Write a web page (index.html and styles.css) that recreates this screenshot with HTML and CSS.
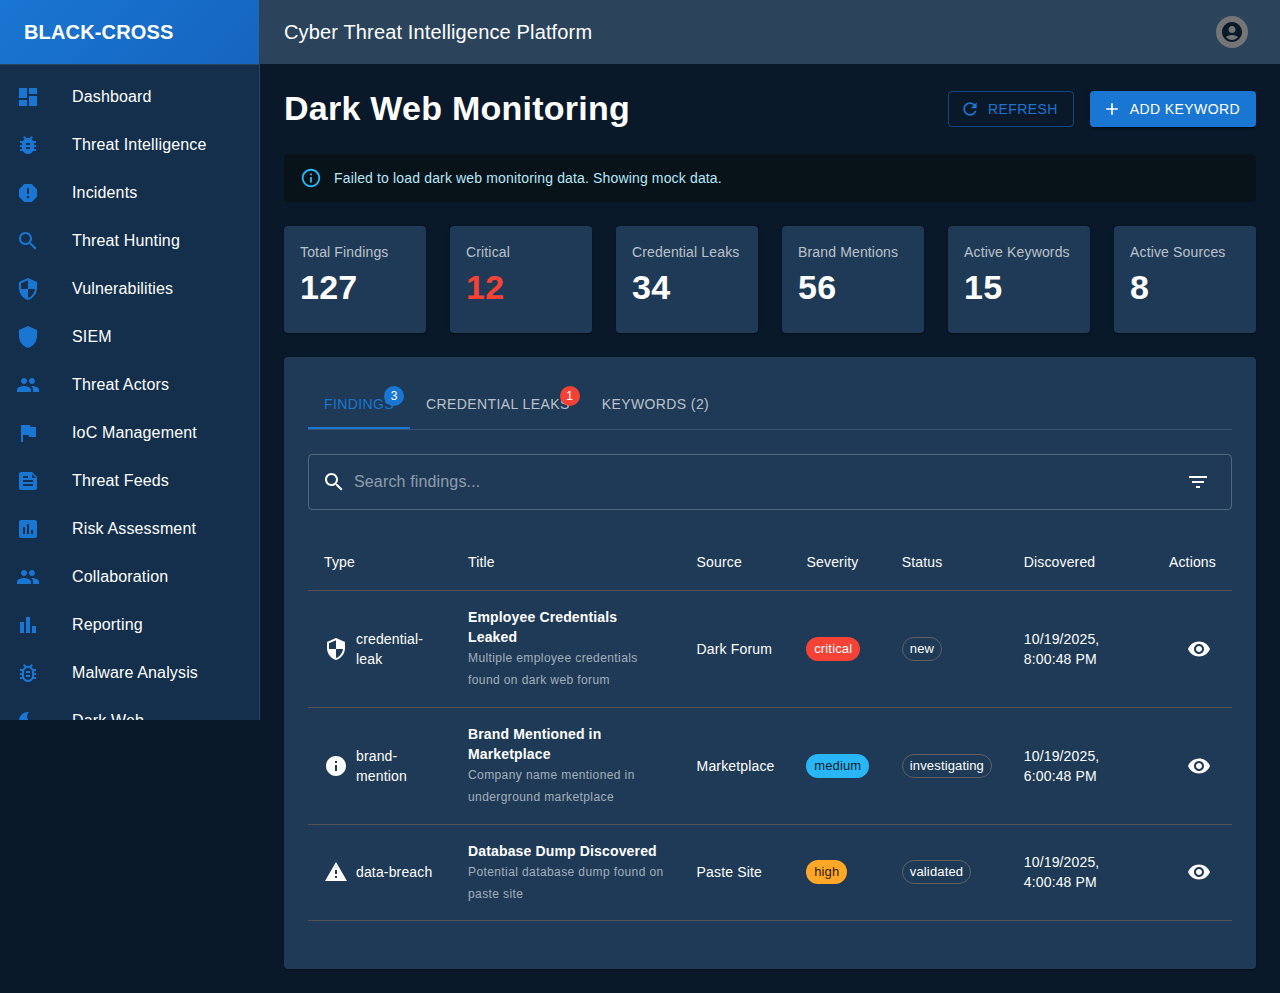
FILE: index.html
```html
<!DOCTYPE html>
<html lang="en">
<head>
<meta charset="utf-8">
<title>Dark Web Monitoring</title>
<link rel="stylesheet" href="styles.css">
</head>
<body>
<div class="app">
  <aside class="sidebar">
    <div class="brand">BLACK-CROSS</div>
    <nav class="nav">
      <a class="nav-item"><svg class="nav-icon" viewBox="0 0 24 24"><path d="M3 13h8V3H3v10zm0 8h8v-6H3v6zm10 0h8V11h-8v10zm0-18v6h8V3h-8z"/></svg><span>Dashboard</span></a>
      <a class="nav-item"><svg class="nav-icon" viewBox="0 0 24 24"><path d="M20 8h-2.81c-.45-.78-1.07-1.45-1.82-1.96L17 4.41 15.59 3l-2.17 2.17C12.96 5.06 12.49 5 12 5c-.49 0-.96.06-1.41.17L8.41 3 7 4.41l1.62 1.63C7.88 6.55 7.26 7.22 6.81 8H4v2h2.09c-.05.33-.09.66-.09 1v1H4v2h2v1c0 .34.04.67.09 1H4v2h2.81c1.04 1.79 2.97 3 5.19 3s4.15-1.21 5.19-3H20v-2h-2.09c.05-.33.09-.66.09-1v-1h2v-2h-2v-1c0-.34-.04-.67-.09-1H20V8zm-6 8h-4v-2h4v2zm0-4h-4v-2h4v2z"/></svg><span>Threat Intelligence</span></a>
      <a class="nav-item"><svg class="nav-icon" viewBox="0 0 24 24"><path d="M15.73 3H8.27L3 8.27v7.46L8.27 21h7.46L21 15.73V8.27L15.73 3zM12 17.3c-.72 0-1.3-.58-1.3-1.3 0-.72.58-1.3 1.3-1.3.72 0 1.3.58 1.3 1.3 0 .72-.58 1.3-1.3 1.3zm1-4.3h-2V7h2v6z"/></svg><span>Incidents</span></a>
      <a class="nav-item"><svg class="nav-icon" viewBox="0 0 24 24"><path d="M15.5 14h-.79l-.28-.27C15.41 12.59 16 11.11 16 9.5 16 5.91 13.09 3 9.5 3S3 5.91 3 9.5 5.91 16 9.5 16c1.61 0 3.09-.59 4.23-1.57l.27.28v.79l5 4.99L20.49 19l-4.99-5zm-6 0C7.01 14 5 11.99 5 9.5S7.01 5 9.5 5 14 7.01 14 9.5 11.99 14 9.5 14z"/></svg><span>Threat Hunting</span></a>
      <a class="nav-item"><svg class="nav-icon" viewBox="0 0 24 24"><path d="M12 1L3 5v6c0 5.55 3.84 10.74 9 12 5.16-1.26 9-6.45 9-12V5l-9-4zm0 10.99h7c-.53 4.12-3.28 7.79-7 8.94V12H5V6.3l7-3.11v8.8z"/></svg><span>Vulnerabilities</span></a>
      <a class="nav-item"><svg class="nav-icon" viewBox="0 0 24 24"><path d="M12 1L3 5v6c0 5.55 3.84 10.74 9 12 5.16-1.26 9-6.45 9-12V5l-9-4z"/></svg><span>SIEM</span></a>
      <a class="nav-item"><svg class="nav-icon" viewBox="0 0 24 24"><path d="M16 11c1.66 0 2.99-1.34 2.99-3S17.66 5 16 5c-1.66 0-3 1.34-3 3s1.34 3 3 3zm-8 0c1.66 0 2.99-1.34 2.99-3S9.66 5 8 5C6.34 5 5 6.34 5 8s1.34 3 3 3zm0 2c-2.33 0-7 1.17-7 3.5V19h14v-2.5c0-2.33-4.67-3.5-7-3.5zm8 0c-.29 0-.62.02-.97.05 1.16.84 1.97 1.97 1.97 3.45V19h6v-2.5c0-2.33-4.67-3.5-7-3.5z"/></svg><span>Threat Actors</span></a>
      <a class="nav-item"><svg class="nav-icon" viewBox="0 0 24 24"><path d="M14.4 6L14 4H5v17h2v-7h5.6l.4 2h7V6z"/></svg><span>IoC Management</span></a>
      <a class="nav-item"><svg class="nav-icon" viewBox="0 0 24 24"><path d="M16 3H5c-1.1 0-1.99.9-1.99 2L3 19c0 1.1.89 2 1.99 2H19c1.1 0 2-.9 2-2V8l-5-5zM7 7h5v2H7V7zm10 10H7v-2h10v2zm0-4H7v-2h10v2zm-1-4V5l4 4h-4z"/></svg><span>Threat Feeds</span></a>
      <a class="nav-item"><svg class="nav-icon" viewBox="0 0 24 24"><path d="M19 3H5c-1.1 0-2 .9-2 2v14c0 1.1.9 2 2 2h14c1.1 0 2-.9 2-2V5c0-1.1-.9-2-2-2zM9 17H7v-7h2v7zm4 0h-2V7h2v10zm4 0h-2v-4h2v4z"/></svg><span>Risk Assessment</span></a>
      <a class="nav-item"><svg class="nav-icon" viewBox="0 0 24 24"><path d="M16 11c1.66 0 2.99-1.34 2.99-3S17.66 5 16 5c-1.66 0-3 1.34-3 3s1.34 3 3 3zm-8 0c1.66 0 2.99-1.34 2.99-3S9.66 5 8 5C6.34 5 5 6.34 5 8s1.34 3 3 3zm0 2c-2.33 0-7 1.17-7 3.5V19h14v-2.5c0-2.33-4.67-3.5-7-3.5zm8 0c-.29 0-.62.02-.97.05 1.16.84 1.97 1.97 1.97 3.45V19h6v-2.5c0-2.33-4.67-3.5-7-3.5z"/></svg><span>Collaboration</span></a>
      <a class="nav-item"><svg class="nav-icon" viewBox="0 0 24 24"><path d="M4 9h4v11H4zm12 4h4v7h-4zm-6-9h4v16h-4z"/></svg><span>Reporting</span></a>
      <a class="nav-item"><svg class="nav-icon" viewBox="0 0 24 24"><path d="M20 8h-2.81c-.45-.78-1.07-1.45-1.82-1.96L17 4.41 15.59 3l-2.17 2.17C12.96 5.06 12.49 5 12 5s-.96.06-1.41.17L8.41 3 7 4.41l1.62 1.63C7.88 6.55 7.26 7.22 6.81 8H4v2h2.09c-.05.33-.09.66-.09 1v1H4v2h2v1c0 .34.04.67.09 1H4v2h2.81c1.04 1.79 2.97 3 5.19 3s4.15-1.21 5.19-3H20v-2h-2.09c.05-.33.09-.66.09-1v-1h2v-2h-2v-1c0-.34-.04-.67-.09-1H20V8zm-4 4v3c0 .22-.03.47-.07.7l-.1.65-.37.65c-.72 1.24-2.04 2-3.46 2s-2.74-.77-3.46-2l-.37-.64-.1-.65C8.03 15.48 8 15.23 8 15v-4c0-.23.03-.48.07-.7l.1-.65.37-.65c.3-.52.72-.97 1.21-1.31l.57-.39.74-.18c.31-.08.63-.12.94-.12.32 0 .63.04.95.12l.68.16.61.42c.5.34.91.78 1.21 1.31l.38.65.1.65c.04.22.07.47.07.69v1zm-6 2h4v2h-4zm0-4h4v2h-4z"/></svg><span>Malware Analysis</span></a>
      <a class="nav-item"><svg class="nav-icon" viewBox="0 0 24 24"><path d="M12 3c-4.97 0-9 4.03-9 9s4.03 9 9 9 9-4.03 9-9c0-.46-.04-.92-.1-1.36-.98 1.37-2.58 2.26-4.4 2.26-2.98 0-5.4-2.42-5.4-5.4 0-1.81.89-3.42 2.26-4.4-.44-.06-.9-.1-1.36-.1z"/></svg><span>Dark Web</span></a>
    </nav>
  </aside>

  <div class="main">
    <header class="topbar">
      <h2 class="topbar-title">Cyber Threat Intelligence Platform</h2>
      <div class="avatar"><svg class="icon" viewBox="0 0 24 24"><path d="M12 2C6.48 2 2 6.48 2 12s4.48 10 10 10 10-4.48 10-10S17.52 2 12 2zm0 4c1.93 0 3.5 1.57 3.5 3.5S13.93 13 12 13s-3.5-1.57-3.5-3.5S10.07 6 12 6zm0 14c-2.03 0-4.43-.82-6.14-2.88C7.55 15.8 9.68 15 12 15s4.45.8 6.14 2.12C16.43 19.18 14.03 20 12 20z"/></svg></div>
    </header>

    <main class="content">
      <div class="page-head">
        <h1 class="page-title">Dark Web Monitoring</h1>
        <div class="actions">
          <button class="btn btn-outlined"><svg class="btn-icon" viewBox="0 0 24 24"><path d="M17.65 6.35C16.2 4.9 14.21 4 12 4c-4.42 0-7.99 3.58-7.99 8s3.57 8 7.99 8c3.73 0 6.84-2.55 7.73-6h-2.08c-.82 2.33-3.04 4-5.65 4-3.31 0-6-2.69-6-6s2.69-6 6-6c1.66 0 3.14.69 4.22 1.78L13 11h7V4l-2.35 2.35z"/></svg>Refresh</button>
          <button class="btn btn-contained"><svg class="btn-icon" viewBox="0 0 24 24"><path d="M19 13h-6v6h-2v-6H5v-2h6V5h2v6h6v2z"/></svg>Add Keyword</button>
        </div>
      </div>

      <div class="alert"><svg class="alert-icon" viewBox="0 0 24 24"><path d="M11 7h2v2h-2zm0 4h2v6h-2zm1-9C6.48 2 2 6.48 2 12s4.48 10 10 10 10-4.48 10-10S17.52 2 12 2zm0 18c-4.41 0-8-3.59-8-8s3.59-8 8-8 8 3.59 8 8-3.59 8-8 8z"/></svg><span>Failed to load dark web monitoring data. Showing mock data.</span></div>

      <section class="stats">
        <div class="stat"><div class="stat-label">Total Findings</div><div class="stat-value">127</div></div>
        <div class="stat"><div class="stat-label">Critical</div><div class="stat-value stat-critical">12</div></div>
        <div class="stat"><div class="stat-label">Credential Leaks</div><div class="stat-value">34</div></div>
        <div class="stat"><div class="stat-label">Brand Mentions</div><div class="stat-value">56</div></div>
        <div class="stat"><div class="stat-label">Active Keywords</div><div class="stat-value">15</div></div>
        <div class="stat"><div class="stat-label">Active Sources</div><div class="stat-value">8</div></div>
      </section>

      <section class="panel">
        <div class="tabs">
          <div class="tab tab-active">Findings<span class="tab-badge badge-blue">3</span></div>
          <div class="tab">Credential Leaks<span class="tab-badge badge-red">1</span></div>
          <div class="tab">Keywords (2)</div>
        </div>

        <div class="search">
          <svg class="icon search-icon" viewBox="0 0 24 24"><path d="M15.5 14h-.79l-.28-.27C15.41 12.59 16 11.11 16 9.5 16 5.91 13.09 3 9.5 3S3 5.91 3 9.5 5.91 16 9.5 16c1.61 0 3.09-.59 4.23-1.57l.27.28v.79l5 4.99L20.49 19l-4.99-5zm-6 0C7.01 14 5 11.99 5 9.5S7.01 5 9.5 5 14 7.01 14 9.5 11.99 14 9.5 14z"/></svg>
          <span class="search-text">Search findings...</span>
          <svg class="icon filter-icon" viewBox="0 0 24 24"><path d="M10 18h4v-2h-4v2zM3 6v2h18V6H3zm3 7h12v-2H6v2z"/></svg>
        </div>

        <table class="table">
          <thead>
            <tr>
              <th class="col-type">Type</th>
              <th class="col-title">Title</th>
              <th class="col-source">Source</th>
              <th class="col-severity">Severity</th>
              <th class="col-status">Status</th>
              <th class="col-date">Discovered</th>
              <th class="col-actions">Actions</th>
            </tr>
          </thead>
          <tbody>
            <tr>
              <td><div class="type"><svg class="icon" viewBox="0 0 24 24"><path d="M12 1L3 5v6c0 5.55 3.84 10.74 9 12 5.16-1.26 9-6.45 9-12V5l-9-4zm0 10.99h7c-.53 4.12-3.28 7.79-7 8.94V12H5V6.3l7-3.11v8.8z"/></svg><span>credential-leak</span></div></td>
              <td class="cell-finding"><div class="finding-title">Employee Credentials Leaked</div><div class="finding-desc">Multiple employee credentials found on dark web forum</div></td>
              <td>Dark Forum</td>
              <td><span class="chip chip-critical">critical</span></td>
              <td><span class="chip chip-outlined">new</span></td>
              <td>10/19/2025, 8:00:48 PM</td>
              <td><button class="icon-btn"><svg class="icon" viewBox="0 0 24 24"><path d="M12 4.5C7 4.5 2.73 7.61 1 12c1.73 4.39 6 7.5 11 7.5s9.27-3.11 11-7.5c-1.73-4.39-6-7.5-11-7.5zM12 17c-2.76 0-5-2.24-5-5s2.24-5 5-5 5 2.24 5 5-2.24 5-5 5zm0-8c-1.66 0-3 1.34-3 3s1.34 3 3 3 3-1.34 3-3-1.34-3-3-3z"/></svg></button></td>
            </tr>
            <tr>
              <td><div class="type"><svg class="icon" viewBox="0 0 24 24"><path d="M12 2C6.48 2 2 6.48 2 12s4.48 10 10 10 10-4.48 10-10S17.52 2 12 2zm1 15h-2v-6h2v6zm0-8h-2V7h2v2z"/></svg><span>brand-mention</span></div></td>
              <td class="cell-finding"><div class="finding-title">Brand Mentioned in Marketplace</div><div class="finding-desc">Company name mentioned in underground marketplace</div></td>
              <td>Marketplace</td>
              <td><span class="chip chip-medium">medium</span></td>
              <td><span class="chip chip-outlined">investigating</span></td>
              <td>10/19/2025, 6:00:48 PM</td>
              <td><button class="icon-btn"><svg class="icon" viewBox="0 0 24 24"><path d="M12 4.5C7 4.5 2.73 7.61 1 12c1.73 4.39 6 7.5 11 7.5s9.27-3.11 11-7.5c-1.73-4.39-6-7.5-11-7.5zM12 17c-2.76 0-5-2.24-5-5s2.24-5 5-5 5 2.24 5 5-2.24 5-5 5zm0-8c-1.66 0-3 1.34-3 3s1.34 3 3 3 3-1.34 3-3-1.34-3-3-3z"/></svg></button></td>
            </tr>
            <tr>
              <td><div class="type"><svg class="icon" viewBox="0 0 24 24"><path d="M1 21h22L12 2 1 21zm12-3h-2v-2h2v2zm0-4h-2v-4h2v4z"/></svg><span>data-breach</span></div></td>
              <td class="cell-finding"><div class="finding-title">Database Dump Discovered</div><div class="finding-desc">Potential database dump found on paste site</div></td>
              <td>Paste Site</td>
              <td><span class="chip chip-high">high</span></td>
              <td><span class="chip chip-outlined">validated</span></td>
              <td>10/19/2025, 4:00:48 PM</td>
              <td><button class="icon-btn"><svg class="icon" viewBox="0 0 24 24"><path d="M12 4.5C7 4.5 2.73 7.61 1 12c1.73 4.39 6 7.5 11 7.5s9.27-3.11 11-7.5c-1.73-4.39-6-7.5-11-7.5zM12 17c-2.76 0-5-2.24-5-5s2.24-5 5-5 5 2.24 5 5-2.24 5-5 5zm0-8c-1.66 0-3 1.34-3 3s1.34 3 3 3 3-1.34 3-3-1.34-3-3-3z"/></svg></button></td>
            </tr>
          </tbody>
        </table>
      </section>
    </main>
  </div>
</div>
</body>
</html>
```

FILE: styles.css
```css
* { box-sizing: border-box; }

html, body {
  margin: 0;
  background: #0a1929;
}

body {
  font-family: "Liberation Sans", Arial, sans-serif;
  font-size: 14px;
  line-height: 20px;
  letter-spacing: 0.15px;
  color: #fff;
}

.app {
  display: flex;
  align-items: flex-start;
  min-height: 993px;
}

/* Sidebar */
.sidebar {
  flex: 0 0 260px;
  height: 720px;
  display: flex;
  flex-direction: column;
  overflow: hidden;
  background: #132f4c;
  border-right: 1px solid #2b445c;
}

.brand {
  flex: 0 0 65px;
  display: flex;
  align-items: center;
  padding: 0 24px 1px;
  font-size: 20px;
  font-weight: 700;
  background: linear-gradient(135deg, #1976d2 0%, #1565c0 100%);
  border-bottom: 1px solid #2b445c;
}

.nav {
  padding-top: 8px;
}

.nav-item {
  display: flex;
  align-items: center;
  height: 48px;
  padding: 0 16px;
  font-size: 16px;
  line-height: 24px;
  color: #fff;
}

.nav-icon {
  flex: 0 0 24px;
  width: 24px;
  height: 24px;
  margin-right: 32px;
  fill: #1976d2;
}

/* Main */
.main {
  flex: 1 1 0;
  min-width: 0;
}

.topbar {
  height: 64px;
  display: flex;
  align-items: center;
  justify-content: space-between;
  padding: 0 32px 0 24px;
  background: #2b445c;
}

.topbar-title {
  margin: 0;
  font-size: 20px;
  line-height: 32px;
  font-weight: 400;
}

.avatar {
  width: 32px;
  height: 32px;
  display: flex;
  align-items: center;
  justify-content: center;
  border-radius: 50%;
  background: #757575;
  color: #0a1929;
}

.icon {
  flex: 0 0 24px;
  width: 24px;
  height: 24px;
  fill: currentColor;
}

.content {
  padding: 24px;
}

.page-head {
  display: flex;
  align-items: center;
  justify-content: space-between;
  height: 42px;
  margin-bottom: 24px;
}

.page-title {
  margin: -2px 0 0;
  font-size: 34px;
  line-height: 42px;
  font-weight: 700;
  letter-spacing: 0.25px;
}

.actions {
  display: flex;
  gap: 16px;
}

.btn {
  height: 36px;
  display: inline-flex;
  align-items: center;
  border-radius: 4px;
  font-family: inherit;
  font-size: 14px;
  letter-spacing: 0.4px;
  text-transform: uppercase;
  line-height: 20px;
}

.btn-icon {
  width: 20px;
  height: 20px;
  margin-right: 8px;
  fill: currentColor;
}

.btn-outlined {
  padding: 0 15px 0 11px;
  background: transparent;
  color: #1976d2;
  border: 1px solid rgba(25, 118, 210, 0.5);
}

.btn-contained {
  padding: 0 16px 0 12px;
  background: #1976d2;
  color: #fff;
  border: 0;
  box-shadow: 0 3px 1px -2px rgba(0,0,0,.2), 0 2px 2px 0 rgba(0,0,0,.14), 0 1px 5px 0 rgba(0,0,0,.12);
}

.alert {
  height: 48px;
  display: flex;
  align-items: center;
  padding: 0 16px;
  margin-bottom: 24px;
  border-radius: 4px;
  background: #071318;
  color: #b8e7fb;
}

.alert-icon {
  flex: 0 0 22px;
  width: 22px;
  height: 22px;
  margin-right: 12px;
  fill: #29b6f6;
}

.stats {
  display: grid;
  grid-template-columns: repeat(6, 1fr);
  gap: 24px;
  margin-bottom: 24px;
}

.stat {
  height: 107px;
  padding: 16px;
  border-radius: 4px;
  background: #1e3a56;
  box-shadow: 0 2px 1px -1px rgba(0,0,0,.2), 0 1px 1px 0 rgba(0,0,0,.14), 0 1px 3px 0 rgba(0,0,0,.12);
}

.stat-label {
  color: rgba(255, 255, 255, 0.7);
}

.stat-value {
  margin-top: 4px;
  font-size: 34px;
  line-height: 42px;
  font-weight: 700;
  letter-spacing: 0.25px;
}

.stat-critical {
  color: #f44336;
}

.panel {
  height: 612px;
  padding: 24px;
  border-radius: 4px;
  background: #1e3a56;
  box-shadow: 0 2px 1px -1px rgba(0,0,0,.2), 0 1px 1px 0 rgba(0,0,0,.14), 0 1px 3px 0 rgba(0,0,0,.12);
}

.tabs {
  display: flex;
  height: 49px;
  margin-bottom: 24px;
  border-bottom: 1px solid rgba(255, 255, 255, 0.12);
}

.tab {
  position: relative;
  height: 48px;
  padding: 13px 16px;
  letter-spacing: 0.4px;
  text-transform: uppercase;
  color: rgba(255, 255, 255, 0.7);
}

.tab-active {
  color: #1976d2;
  border-bottom: 2px solid #1976d2;
}

.tab-badge {
  position: absolute;
  top: 5px;
  right: 6px;
  width: 20px;
  height: 20px;
  border-radius: 50%;
  font-size: 12px;
  line-height: 20px;
  letter-spacing: 0;
  text-align: center;
  color: #fff;
}

.badge-blue {
  background: #1976d2;
}

.badge-red {
  background: #f44336;
}

.search {
  height: 56px;
  display: flex;
  align-items: center;
  padding: 0 21px 0 13px;
  margin-bottom: 24px;
  border: 1px solid rgba(255, 255, 255, 0.23);
  border-radius: 4px;
}

.search-icon {
  margin-right: 8px;
}

.search-text {
  flex: 1;
  font-size: 16px;
  color: rgba(255, 255, 255, 0.5);
}

.table {
  width: 924px;
  table-layout: fixed;
  border-collapse: collapse;
}

.table th {
  height: 56px;
  padding: 16px;
  font-weight: 400;
  text-align: left;
  border-bottom: 1px solid #515151;
}

.table td {
  padding: 16px;
  vertical-align: middle;
  border-bottom: 1px solid #515151;
  color: #fff;
}

.table tbody tr:last-child td {
  padding: 15px 16px 16px;
}

.table tbody tr:last-child td.cell-finding {
  padding: 16px 16px 15px;
}

.col-type { width: 144px; }
.col-title { width: 228.6px; }
.col-source { width: 110px; }
.col-severity { width: 95.2px; }
.col-status { width: 122px; }
.col-date { width: 145.2px; }
.col-actions { width: 79px; }

.type {
  display: flex;
  align-items: center;
  gap: 8px;
}

.finding-title {
  font-weight: 700;
}

.finding-desc {
  font-size: 12px;
  line-height: 22px;
  letter-spacing: 0.4px;
  color: rgba(255, 255, 255, 0.6);
}

.chip {
  display: inline-block;
  height: 24px;
  padding: 0 8px;
  border-radius: 12px;
  font-size: 13px;
  line-height: 24px;
  white-space: nowrap;
}

.chip-critical,
.chip-medium,
.chip-high {
  margin-left: -0.4px;
}

.chip-critical {
  background: #f44336;
  color: #fff;
}

.chip-medium {
  background: #29b6f6;
  color: rgba(0, 0, 0, 0.87);
}

.chip-high {
  background: #ffa726;
  color: rgba(0, 0, 0, 0.87);
}

.chip-outlined {
  padding: 0 7px;
  line-height: 22px;
  border: 1px solid #616161;
}

.icon-btn {
  width: 40px;
  height: 40px;
  display: flex;
  align-items: center;
  justify-content: center;
  margin-left: 10px;
  padding: 0;
  border: 0;
  background: transparent;
  color: #fff;
}
```
